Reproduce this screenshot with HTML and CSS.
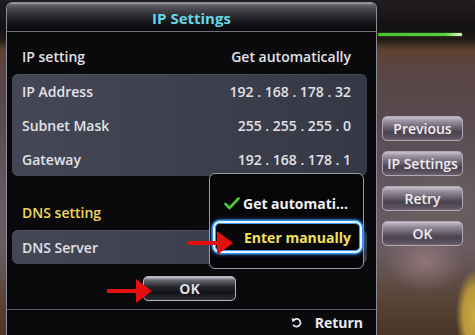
FILE: index.html
```html
<!DOCTYPE html>
<html>
<head>
<meta charset="utf-8">
<link rel="stylesheet" href="styles.css">
</head>
<body>
<div class="screen">
  <div class="strip"></div>
  <div class="dialog">
    <div class="titlebar">IP Settings</div>
    <div class="rule"></div>
    <div class="content">
      <div class="row"><span>IP setting</span><span>Get automatically</span></div>
      <div class="panel">
        <div class="row"><span>IP Address</span><span>192 . 168 . 178 . 32</span></div>
        <div class="row"><span>Subnet Mask</span><span>255 . 255 . 255 . 0</span></div>
        <div class="row"><span>Gateway</span><span>192 . 168 . 178 . 1</span></div>
      </div>
      <div class="row dns-label"><span>DNS setting</span></div>
      <div class="panel">
        <div class="row"><span>DNS Server</span></div>
      </div>
      <div class="btn ok-main">OK</div>
    </div>
    <div class="rule bottom-rule"></div>
    <div class="footer">
      <svg class="ret-icon" width="11" height="11" viewBox="0 0 12 12"><path d="M3.2 3.4 A4.2 4.2 0 1 1 2.4 8.2" fill="none" stroke="#e8e8ee" stroke-width="1.9"/><path d="M0.6 1.4 L5.4 2.4 L1.8 6 Z" fill="#e8e8ee"/></svg>
      <span>Return</span>
    </div>

    <div class="popup">
      <div class="opt"><svg class="check" width="16" height="13" viewBox="0 0 16 13"><path d="M1.5 7 L5.5 11 L14.5 1.5" fill="none" stroke="#4fc83a" stroke-width="2.6" stroke-linecap="round" stroke-linejoin="round"/></svg><span>Get automati...</span></div>
      <div class="opt selected"><span>Enter manually</span></div>
    </div>

    <svg class="arrow arrow-a" width="45" height="24" viewBox="0 0 45 24"><rect x="0" y="10" width="32" height="4" fill="#e4100e"/><path d="M29 0 L45 12 L29 24 Z" fill="#e4100e"/></svg>
    <svg class="arrow arrow-b" width="45" height="24" viewBox="0 0 45 24"><rect x="0" y="10" width="32" height="4" fill="#e4100e"/><path d="M29 0 L45 12 L29 24 Z" fill="#e4100e"/></svg>
  </div>
  <div class="side">
    <div class="green-line"></div>
    <div class="side-buttons">
      <div class="btn side-btn">Previous</div>
      <div class="btn side-btn">IP Settings</div>
      <div class="btn side-btn">Retry</div>
      <div class="btn side-btn">OK</div>
    </div>
  </div>
</div>
</body>
</html>
```

FILE: styles.css
```css
html, body {
  margin: 0;
  padding: 0;
}
body {
  width: 475px;
  height: 335px;
  overflow: hidden;
  font-family: "Open Sans", "DejaVu Sans", sans-serif;
  font-weight: 600;
  background:
    radial-gradient(ellipse 18px 45px at 474px 315px, #c9aa3c 0, #b8963a 60%, rgba(150,120,50,0) 100%),
    radial-gradient(ellipse 40px 30px at 425px 262px, rgba(150,120,125,0.9) 0, rgba(150,120,125,0) 100%),
    radial-gradient(ellipse 50px 40px at 440px 200px, rgba(110,100,90,0.7) 0, rgba(110,100,90,0) 100%),
    linear-gradient(to bottom, #221c1e 0, #141112 30px, #241b17 40px, #5e4230 50px, #5a4542 66px, #584a50 120px, #645860 190px, #6a5c62 250px, #5a463a 295px, #4a3628 335px);
}
.screen {
  display: flex;
  align-items: flex-start;
  height: 335px;
}
.strip {
  width: 6px;
  flex: none;
}
.dialog {
  position: relative;
  flex: none;
  width: 369px;
  height: 340px;
  margin-top: 2px;
  border: 1px solid #8c8c96;
  border-bottom: none;
  border-radius: 6px 6px 0 0;
  background: #0a0a0d;
  display: flex;
  flex-direction: column;
}
.titlebar {
  height: 26px;
  padding-top: 2px;
  border-radius: 5px 5px 0 0;
  background: linear-gradient(to bottom, #a8a8b0 0, #5e5e66 2px, #3a3a40 9px, #1c1c20 17px, #0c0c0e 24px, #0a0a0c 28px);
  color: #66d6e6;
  font-size: 15px;
  font-weight: 700;
  text-align: center;
  line-height: 26px;
}
.rule {
  height: 1px;
  background: #6e6e78;
}
.content {
  display: flex;
  flex-direction: column;
  padding: 0 9px 0 5px;
}
.row {
  height: 34px;
  display: flex;
  align-items: center;
  justify-content: space-between;
  padding: 0 16px 0 10px;
  color: #e2e2e8;
  font-size: 14px;
  white-space: nowrap;
}
.content > .row:first-child {
  margin-top: 7px;
}
.panel {
  margin-top: 1px;
  border-radius: 6px;
  background: linear-gradient(to right, #454756 0, #3c3e4c 60%, #363845 100%);
  box-shadow: inset 0 1px 0 rgba(255,255,255,0.08);
}
.dns-label {
  margin-top: 19px;
  color: #f2d85a;
}
.btn {
  box-sizing: border-box;
  height: 25px;
  border: 1px solid #b4b4be;
  border-radius: 5px;
  display: flex;
  align-items: center;
  justify-content: center;
  color: #e8e8ee;
  font-size: 14px;
  font-weight: 700;
}
.ok-main {
  margin-top: 12px;
  width: 93px;
  align-self: center;
  background: linear-gradient(to bottom, #c8c8d2 0, #6a6a74 3px, #24242a 10px, #121216 16px, #2a2a32 22px, #46464e 25px);
  color: #dcdce4;
}
.bottom-rule {
  margin-top: 8px;
  background: #5a5a64;
}
.footer {
  height: 25px;
  display: flex;
  align-items: center;
  justify-content: flex-end;
  padding-right: 13px;
  color: #ececf0;
  font-size: 14px;
  font-weight: 700;
}
.ret-icon {
  margin-right: 13px;
}
.popup {
  position: absolute;
  left: 202px;
  top: 170px;
  width: 153px;
  height: 94px;
  box-sizing: content-box;
  border: 1px solid #9a9aa6;
  border-radius: 6px;
  background: #060608;
  z-index: 2;
}
.opt {
  display: flex;
  align-items: center;
  color: #f0f0f4;
  font-size: 14px;
  font-weight: 700;
  white-space: nowrap;
}
.opt:first-child {
  height: 32px;
  margin-top: 13px;
  padding-left: 14px;
}
.check {
  margin-right: 3px;
}
.opt.selected {
  box-sizing: border-box;
  margin: 2px 0 0 3px;
  width: 149px;
  height: 32px;
  padding-left: 29px;
  border: 2px solid #e8f4ff;
  border-radius: 7px;
  box-shadow: 0 0 0 1.5px #2f8cf0, inset 0 0 0 1px #3a9af6, 0 0 4px 1px rgba(60,150,255,0.7);
  color: #f4e060;
  background: #08080a;
}
.arrow {
  position: absolute;
  z-index: 3;
}
.arrow-a {
  left: 181px;
  top: 228px;
}
.arrow-b {
  left: 100px;
  top: 276px;
}
.side {
  flex: 1;
  padding-top: 33px;
}
.green-line {
  margin-left: 1px;
  width: 84px;
  height: 3px;
  border-radius: 1px;
  background: linear-gradient(to right, #4cc232 0, #5ad03a 80%, #c8f0b0 95%, #e8f8e0 100%);
  box-shadow: 0 0 2px rgba(90,210,60,0.6);
}
.side-buttons {
  margin-top: 80px;
  margin-left: 5px;
  display: flex;
  flex-direction: column;
  gap: 10px;
}
.side-btn {
  width: 81px;
  font-size: 14px;
  font-weight: 600;
  border-color: #b0a8b4;
  background: linear-gradient(to bottom, #cac2ce 0, #9a92a0 4px, #6e6674 10px, #4a424e 15px, #58505c 20px, #7a7080 25px);
  color: #efecf2;
}
```
